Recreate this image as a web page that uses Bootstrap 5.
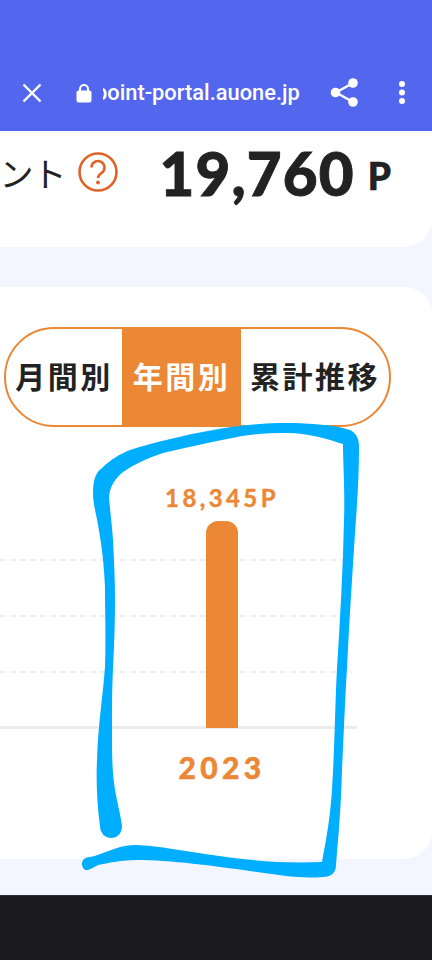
<!DOCTYPE html>
<html lang="ja">
<head>
<meta charset="utf-8">
<title>au PAY ポイント</title>
<link href="https://cdn.jsdelivr.net/npm/bootstrap@5.3.0/dist/css/bootstrap.min.css" rel="stylesheet">
<style>
html,body{height:960px;overflow:hidden}
body{background:#f3f6fe;color:#222;font-family:"Noto Sans CJK JP","Noto Sans",sans-serif}
.screen{height:960px;width:432px;overflow:hidden}
.topbar{height:131px;background:#5367ee;padding:0 22px 0 22px}
.topbar-row{height:24px;margin-top:81px}
.addr-clip{width:197px;margin-left:11px;overflow:hidden;font:500 21.850px/24px Roboto,sans-serif;color:#fff;white-space:nowrap}
.addr-fade{margin-left:-8px}
.ico-lock{margin-left:34px}
.ico-share{margin-left:30px;margin-top:-2px}
.ico-more{margin-left:40px;margin-top:-2px}
.sumcard{height:116px;margin-bottom:40px;border-radius:0 0 28px 0;background:#fff;padding:0 41px 0 0;overflow:hidden}
.sum-row{height:83px}
.sum-label{font-size:34px;line-height:40px;white-space:nowrap;font-weight:400;letter-spacing:-1px}
.ico-help{margin-left:13px;flex:none;margin-top:-2px}
.sum-val{font:900 60px/66px Lato,sans-serif;margin-left:41px;letter-spacing:1.200px;color:#222;-webkit-text-stroke:.9px #222}
.sum-unit{font:900 37px/66px Lato,sans-serif;margin-left:13px;padding-top:6px;-webkit-text-stroke:.6px #222}
.chartcard{height:572px;margin-bottom:36px;border-radius:0 28px 28px 0;background:#fff;padding:40px 0 0 4px}
.seg{width:387px;height:100px;border:2px solid #eb8735;border-radius:50px;overflow:hidden}
.seg-item{display:flex;align-items:center;justify-content:center;font-size:30px;font-weight:700;letter-spacing:2.500px;color:#222;white-space:nowrap;padding-bottom:3px}
.seg-a{width:116px}
.seg-b{width:119px;background:#eb8735;color:#fff}
.seg-c{flex:1 1 0}
.plot{width:357px;margin:132px 0 0 -4px;position:relative;height:170px}
.gl{height:56px;width:352px;background:repeating-linear-gradient(90deg,#eeeeee 0 6px,transparent 6px 10px) top/100% 2px no-repeat}
.axis{position:absolute;left:0;right:0;bottom:0;height:3px;background:#ececec}
.barcol{position:absolute;left:165px;bottom:1px;width:114px;text-align:center}
.val-lbl{font:700 24px/26px "Lato",sans-serif;letter-spacing:3.400px;color:#eb8735;margin-bottom:10px;white-space:nowrap;-webkit-text-stroke:.4px #eb8735}
.bar-fill{width:32px;height:207px;background:#eb8735;border-radius:12px 12px 0 0;margin:0 auto}
.year-lbl{font:900 30px/36px Lato,sans-serif;letter-spacing:4.300px;color:#eb8735;text-align:center;width:114px;margin:20px 0 0 161px;-webkit-text-stroke:.5px #eb8735}
.navfoot{height:65px;background:#1c1c20;border-top:1px solid #2c2e33}
.scribble{position:absolute;left:0;top:0;pointer-events:none}
</style>
</head>
<body>
<div class="screen d-flex flex-column position-relative">
  <header class="topbar flex-shrink-0">
    <div class="topbar-row d-flex align-items-center">
      <svg width="20" height="20" viewBox="0 0 20 20" aria-hidden="true"><path d="M1.5 1.5 18.500 18.500M18.500 1.500 1.500 18.500" stroke="#fff" stroke-width="2.400" fill="none"/></svg>
      <svg class="ico-lock" width="16" height="19" viewBox="0 0 16 19" aria-hidden="true"><path d="M4 7V5a4 4 0 0 1 8 0v2" fill="none" stroke="#fff" stroke-width="2"/><rect x="0.500" y="6.500" width="15" height="12" rx="2" fill="#fff"/></svg>
      <div class="addr-clip"><span class="addr-fade d-inline-block">point-portal.auone.jp</span></div>
      <svg class="ico-share" width="28" height="30" viewBox="0 0 28 30" aria-hidden="true"><path d="M23 6 6 15.500 23 25" fill="none" stroke="#fff" stroke-width="2.400"/><circle cx="23" cy="6" r="4.800" fill="#fff"/><circle cx="5.500" cy="15.500" r="4.800" fill="#fff"/><circle cx="23" cy="25" r="4.800" fill="#fff"/></svg>
      <svg class="ico-more" width="8" height="24" viewBox="0 0 8 24" aria-hidden="true"><circle cx="4" cy="4" r="3" fill="#fff"/><circle cx="4" cy="12.500" r="3" fill="#fff"/><circle cx="4" cy="21" r="3" fill="#fff"/></svg>
    </div>
  </header>

  <main class="flex-grow-1">
    <section class="sumcard d-flex flex-column">
      <div class="sum-row d-flex align-items-center justify-content-end">
        <span class="sum-label">保有ポイント</span>
        <svg class="ico-help" width="40" height="40" viewBox="0 0 40 40" aria-hidden="true"><circle cx="20" cy="20" r="18.500" fill="none" stroke="#df6329" stroke-width="2.600"/><path d="M13.500 15.500a6.500 6.500 0 1 1 10 5.500c-2.200 1.500-3.500 2.500-3.500 5" fill="none" stroke="#df6329" stroke-width="2.600"/><circle cx="20" cy="30.500" r="1.900" fill="#df6329"/></svg>
        <span class="sum-val">19,760</span><span class="sum-unit">P</span>
      </div>
    </section>

    <section class="chartcard">
      <div class="seg d-flex">
        <div class="seg-item seg-a">月間別</div>
        <div class="seg-item seg-b">年間別</div>
        <div class="seg-item seg-c">累計推移</div>
      </div>
      <div class="plot">
        <div class="gl"></div><div class="gl"></div><div class="gl"></div>
        <div class="axis"></div>
        <div class="barcol">
          <div class="val-lbl">18,345P</div>
          <div class="bar-fill"></div>
        </div>
      </div>
      <div class="year-lbl">2023</div>
    </section>
  </main>

  <footer class="navfoot flex-shrink-0"></footer>

  <svg class="scribble" width="432" height="960" viewBox="0 0 432 960" aria-hidden="true">
    <path fill="#00aeff" d="M122 826C122 834 117 838 111 838C105 838 100 833 100 826C97 805 96 780 97 760C98 725 103 695 105 667C106 640 105 610 105 587C104 565 102 547 98 525C96 512 93 505 93 492C93 480 96 472 102 468C110 460 120 454 130 450C155 442 185 435 213 430C240 425 265 423 287 423C310 423 335 425 350 430C356 433 359 438 359 447C359 480 357 505 355 533C352 580 349 625 347 668C345 700 344 730 342 770C341 810 338 840 336 865C336 873 331 877 323 877C300 879 280 875 250 871C215 866 170 860 137 860C122 860 108 863 98 865C94 867 91 869 88 870C84 871 82 867 82 864C82 860 85 857 90 857C102 855 118 845 134 845C150 845 180 850 205 854C240 859 275 864 322 862C326 840 330 820 332 790C335 740 335 705 337 668C340 620 343 570 344 520C345 490 343 465 343 444C330 440 310 433 287 433C265 433 250 434 227 439C205 443 185 448 163 453C148 458 133 465 123 472C116 478 110 485 109 497C110 510 112 525 113 540C114 560 115 580 115 600C115 625 114 650 113 668C112 690 112 710 112 727C112 745 112 760 113 773C114 785 116 795 117 800C119 810 121 818 122 826Z"/>
  </svg>
</div>
<script src="https://cdn.jsdelivr.net/npm/bootstrap@5.3.0/dist/js/bootstrap.bundle.min.js"></script>
</body>
</html>
